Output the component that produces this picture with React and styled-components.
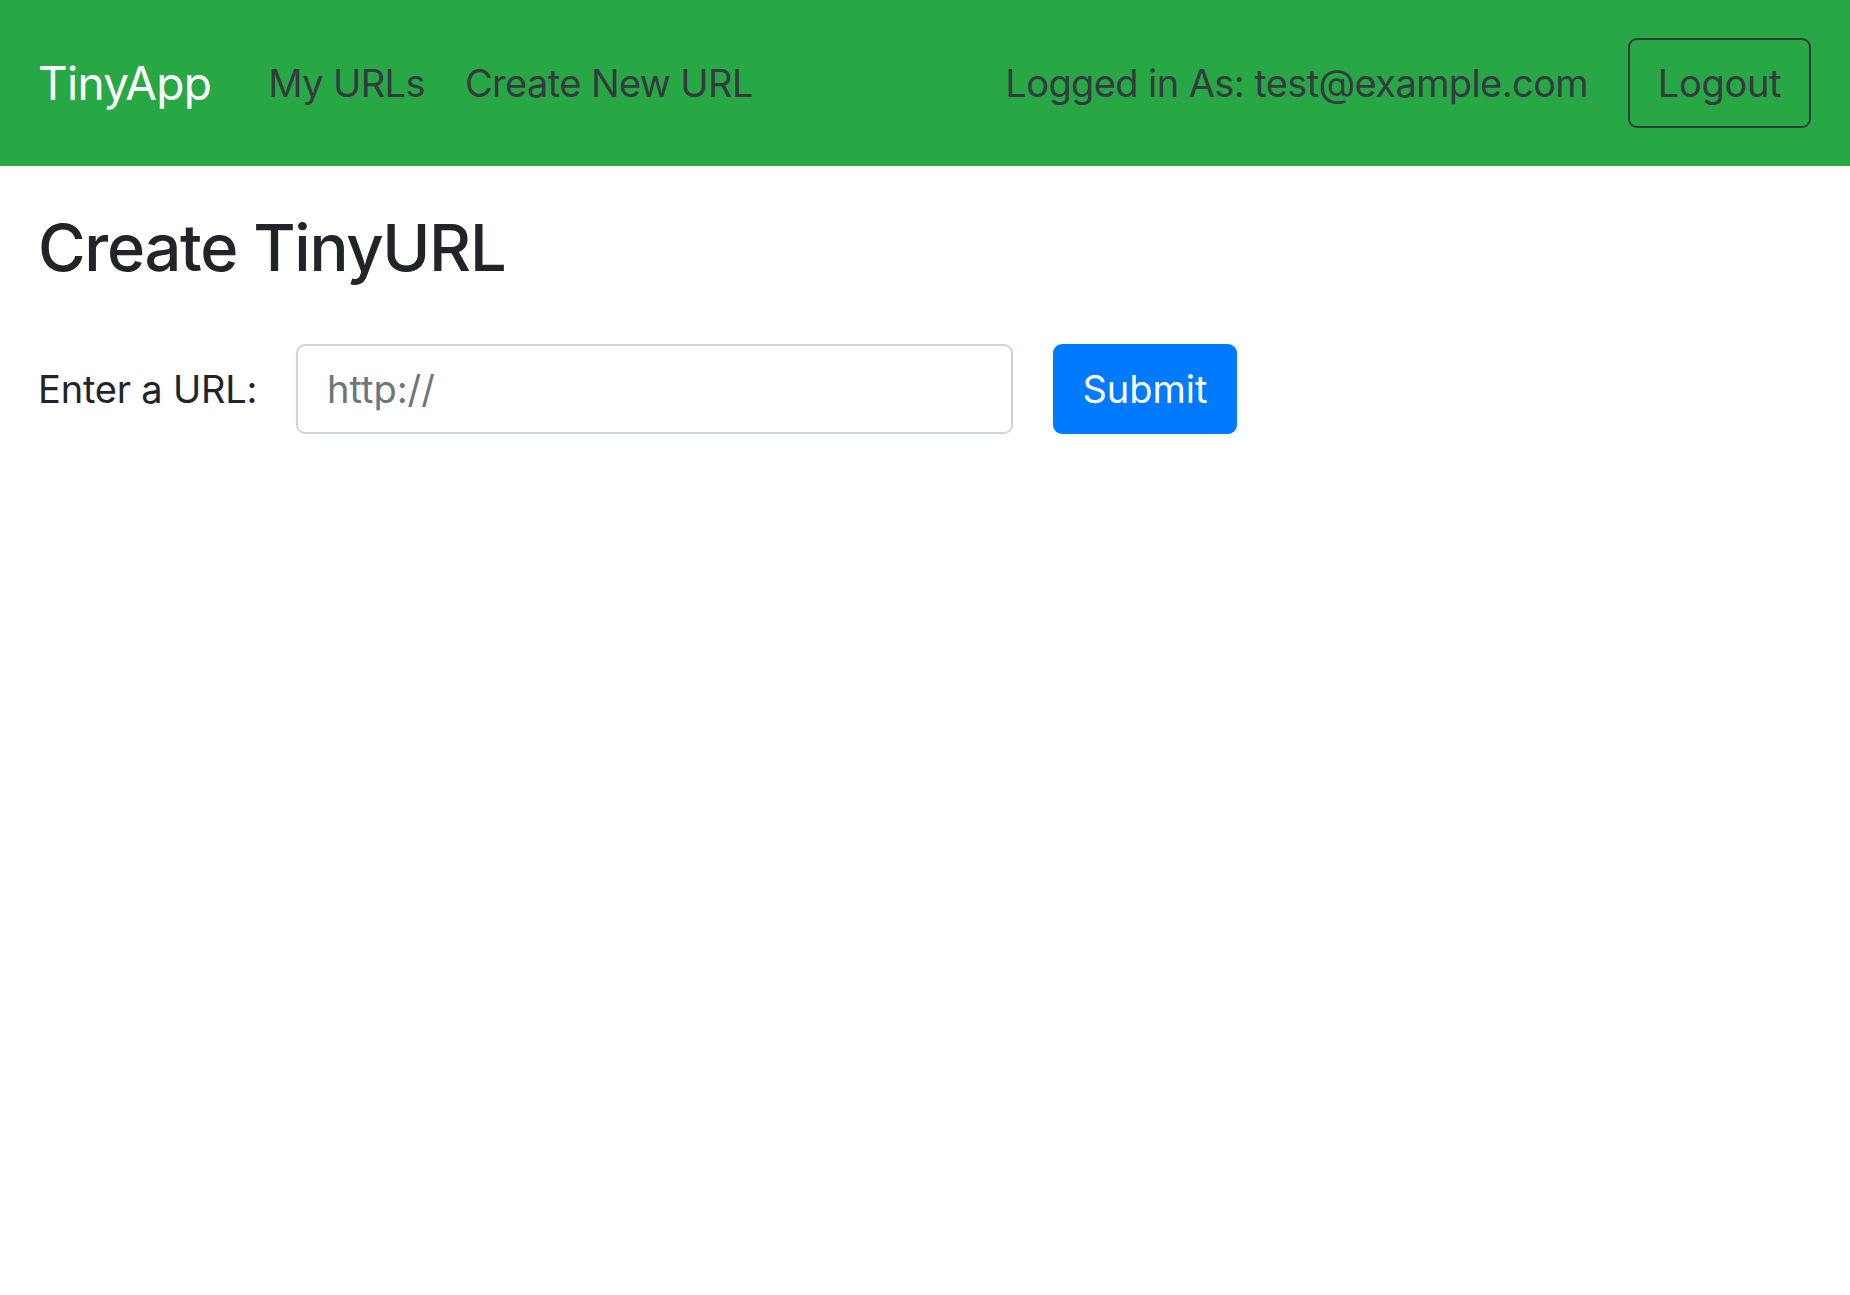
import React from "react";
import styled, { createGlobalStyle } from "styled-components";

const Global = createGlobalStyle`
  html, body { margin: 0; padding: 0; background: #fff; }
  body { font-family: Inter, "Noto Sans", sans-serif; color: #212529; }
  * { box-sizing: border-box; }
`;

const Navbar = styled.nav`
  height: 166px;
  background: #28a745;
  display: flex;
  align-items: center;
  padding: 0 39px 0 38px;
`;

const Brand = styled.a`
  color: #fff;
  font-size: 46px;
  letter-spacing: -0.7px;
  line-height: 1;
  text-decoration: none;
  margin-right: 57px;
`;

const NavLinks = styled.div`
  display: flex;
  align-items: center;
  gap: 40px;
`;

const NavLink = styled.a`
  color: #343a40;
  font-size: 38px;
  letter-spacing: -0.6px;
  text-decoration: none;
  line-height: 1.5;
`;

const RightGroup = styled.div`
  margin-left: auto;
  display: flex;
  align-items: center;
  gap: 40px;
`;

const UserText = styled.span`
  color: #343a40;
  font-size: 38px;
  letter-spacing: -0.6px;
  line-height: 1.5;
`;

const OutlineButton = styled.button`
  width: 183px;
  height: 90px;
  background: transparent;
  border: 2px solid #343a40;
  border-radius: 9px;
  color: #343a40;
  font-family: inherit;
  font-size: 38px;
  letter-spacing: -0.3px;
  padding: 0;
  display: flex;
  align-items: center;
  justify-content: center;
`;

const Main = styled.main`
  padding: 43px 40px 0 38px;
`;

const Title = styled.h1`
  margin: 0;
  font-size: 65px;
  letter-spacing: -1.3px;
  font-weight: 500;
  line-height: 1.2;
  color: #212529;
`;

const Form = styled.form`
  margin-top: 57px;
  display: flex;
  align-items: center;
`;

const Label = styled.label`
  font-size: 38px;
  letter-spacing: -0.2px;
  line-height: 1.5;
  color: #212529;
  width: 258px;
`;

const Input = styled.input`
  width: 717px;
  height: 90px;
  border: 2px solid #ced4da;
  border-radius: 9px;
  padding: 0 29px;
  font-family: inherit;
  font-size: 38px;
  color: #495057;
  outline: none;
  &::placeholder { color: #6c757d; }
`;

const PrimaryButton = styled.button`
  margin-left: 40px;
  width: 184px;
  height: 90px;
  background: #007bff;
  border: none;
  border-radius: 9px;
  color: #fff;
  font-family: inherit;
  font-size: 38px;
  padding: 0;
`;

export default function App() {
  return (
    <>
      <Global />
      <Navbar>
        <Brand href="#">TinyApp</Brand>
        <NavLinks>
          <NavLink href="#">My URLs</NavLink>
          <NavLink href="#">Create New URL</NavLink>
        </NavLinks>
        <RightGroup>
          <UserText>Logged in As: test@example.com</UserText>
          <OutlineButton type="button">Logout</OutlineButton>
        </RightGroup>
      </Navbar>
      <Main>
        <Title>Create TinyURL</Title>
        <Form onSubmit={(e) => e.preventDefault()}>
          <Label htmlFor="longURL">Enter a URL:</Label>
          <Input id="longURL" type="text" placeholder="http://" />
          <PrimaryButton type="submit">Submit</PrimaryButton>
        </Form>
      </Main>
    </>
  );
}
